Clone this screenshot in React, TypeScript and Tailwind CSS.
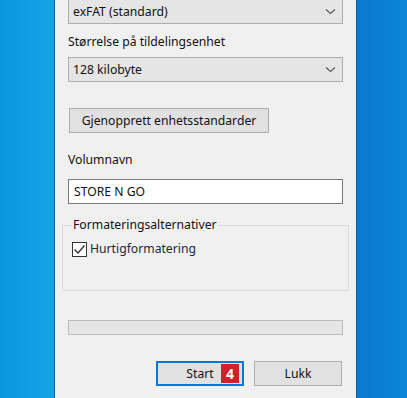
import React from "react";

const Chevron: React.FC = () => (
  <svg width="11" height="7" viewBox="0 0 11 7" className="shrink-0">
    <path d="M1 1.5 L5.5 5.5 L10 1.5" fill="none" stroke="#5a5a5a" strokeWidth="1.2" />
  </svg>
);

const Select: React.FC<{ value: string; className?: string }> = ({ value, className = "" }) => (
  <div
    className={`flex h-[25px] items-center justify-between border border-[#adadad] bg-[#e5e5e5] pl-[4px] pr-[6px] ${className}`}
  >
    <span>{value}</span>
    <Chevron />
  </div>
);

const App: React.FC = () => {
  return (
    <div
      className="flex h-[398px] w-[407px] overflow-hidden text-[12.2px] leading-[16px] text-[#111]"
      style={{ fontFamily: '"Segoe UI", "Noto Sans", "Liberation Sans", sans-serif' }}
    >
      {/* desktop, left */}
      <div className="w-[54px] bg-gradient-to-r from-[#0b97de] to-[#16a3e6]" />
      <div className="w-px bg-[#0a5e9c]" />

      {/* dialog */}
      <div className="flex w-[301px] flex-col bg-[#f0f0f0] px-[13px]">
        <Select value="exFAT (standard)" className="-mt-px" />

        <div className="mt-[10px] h-[16px]">Størrelse på tildelingsenhet</div>
        <Select value="128 kilobyte" className="mt-[7px]" />

        <button className="mt-[26px] ml-px flex h-[25px] w-[200px] items-center justify-center border border-[#adadad] bg-[#e1e1e1]">
          Gjenopprett enhetsstandarder
        </button>

        <div className="mt-[19px] h-[16px]">Volumnavn</div>
        <div className="mt-[11px] flex h-[25px] items-center border border-[#7a7a7a] bg-white pl-[5px]">
          STORE N GO
        </div>

        <fieldset className="-mx-[6px] mt-[13px] h-[74px] border border-[#dcdcdc] px-[9px]">
          <legend className="px-[1px]">Formateringsalternativer</legend>
          <label className="mt-[8px] flex items-center gap-[3px] text-[#1c2740]">
            <span className="flex h-[15px] w-[15px] items-center justify-center border border-[#333] bg-white">
              <svg width="13" height="11" viewBox="0 0 13 11">
                <path d="M1.5 5.5 L5 9 L11.5 1.5" fill="none" stroke="#333" strokeWidth="1.4" />
              </svg>
            </span>
            Hurtigformatering
          </label>
        </fieldset>

        <div className="mt-[29px] h-[15px] border border-[#bcbcbc] bg-[#e6e6e6]" />

        <div className="mt-[26px] flex justify-end gap-[10px] pr-[1px]">
          <button className="relative flex h-[25px] w-[88px] items-center justify-center border-2 border-[#0078d7] bg-[#e1e1e1]">
            Start
            <span className="absolute right-[3px] top-[1px] flex h-[19px] w-[18px] items-center justify-center bg-[#d31f2c] text-[14px] font-bold text-white">
              4
            </span>
          </button>
          <button className="flex h-[25px] w-[88px] items-center justify-center border border-[#adadad] bg-[#e1e1e1]">
            Lukk
          </button>
        </div>
      </div>

      {/* desktop, right */}
      <div className="w-px bg-[#0a5e9c]" />
      <div className="flex-1 bg-gradient-to-r from-[#0a7ace] to-[#0c84d6]" />
    </div>
  );
};

export default App;
